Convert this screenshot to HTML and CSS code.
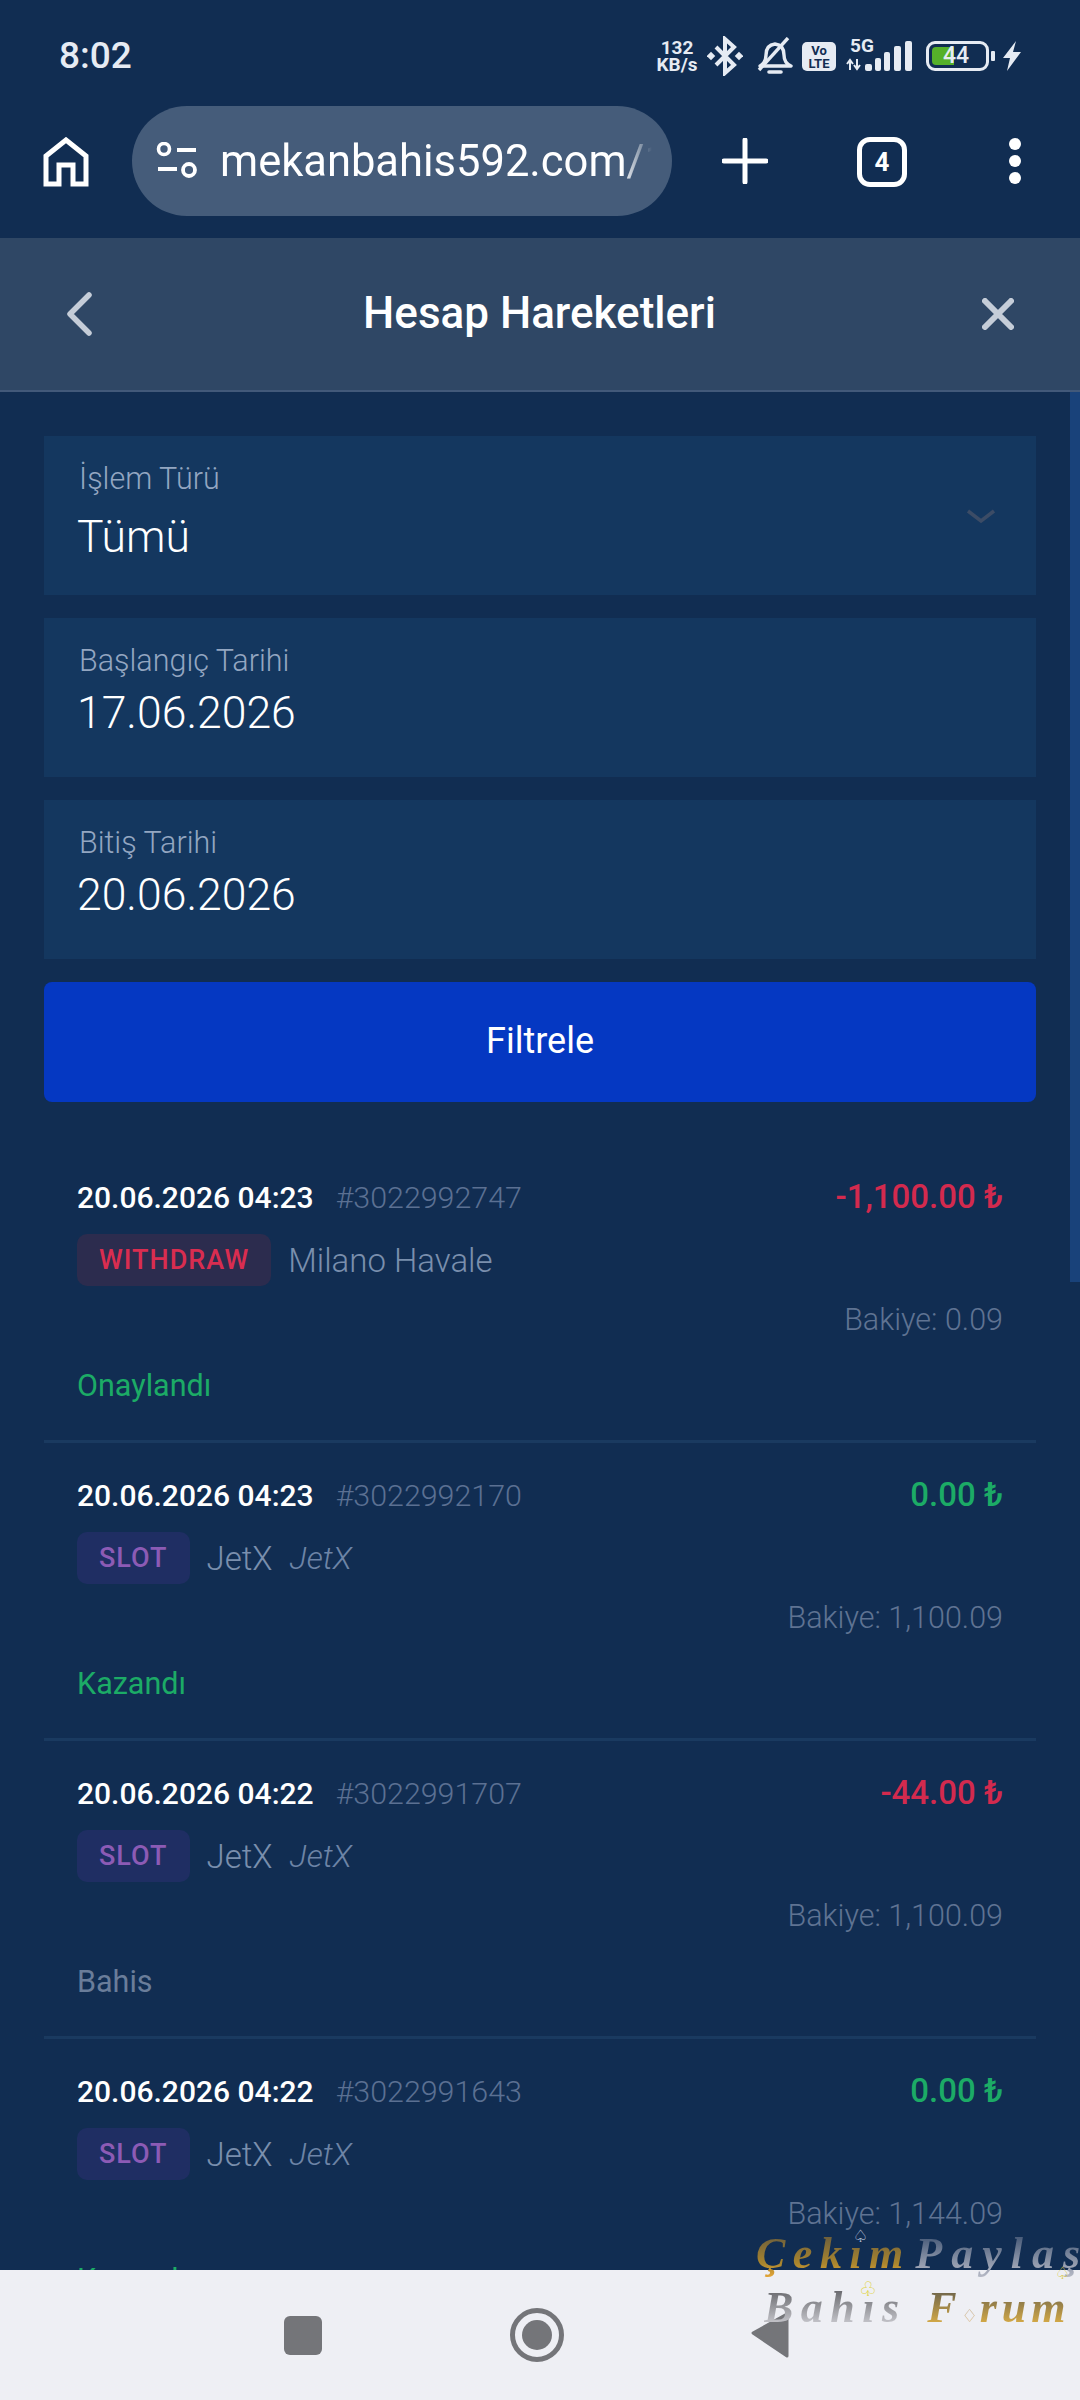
FILE: index.html
```html
<!DOCTYPE html>
<html lang="tr">

<head>
    <meta charset="UTF-8">
    <meta name="viewport" content="width=device-width, initial-scale=1.0">
    <title>Hesap Hareketleri</title>
    <link rel="stylesheet" href="styles.css">
</head>

<body>
    <header class="statusBar">
        <span class="clock">8:02</span>
        <div class="statusIcons">
            <span class="netSpeed">132<br>KB/s</span>
            <svg class="iconBt" viewBox="0 0 36 40" width="36" height="40">
                <path d="M9 11 L27 29 L18 37 V3 L27 11 L9 29" fill="none" stroke="#e6ebf3" stroke-width="4" />
                <rect x="1" y="17" width="6" height="6" transform="rotate(45 4 20)" fill="#e6ebf3" />
                <rect x="29" y="17" width="6" height="6" transform="rotate(45 32 20)" fill="#e6ebf3" />
            </svg>
            <svg class="iconBell" viewBox="0 0 36 38" width="36" height="38">
                <path d="M3 29 Q9 26 9 18 Q9 8 18 7 Q27 8 27 18 Q27 26 34 29 Z" fill="none" stroke="#e6ebf3" stroke-width="3.4" stroke-linejoin="round" />
                <path d="M12 35 H24" stroke="#e6ebf3" stroke-width="3.6" stroke-linecap="round" />
                <path d="M2 33 L31 1" stroke="#e6ebf3" stroke-width="3.4" />
            </svg>
            <span class="volte">Vo<br>LTE</span>
            <div class="signal">
                <span class="fiveG">5G</span>
                <svg viewBox="0 0 66 32" width="66" height="32">
                    <path d="M4 20 V30 M1 24 L4 20 L7 24 M11 19 V29 M8 25 L11 29 L14 25" fill="none" stroke="#e6ebf3" stroke-width="2" />
                    <rect x="19" y="24" width="7" height="7" rx="2" fill="#e6ebf3" />
                    <rect x="29" y="18" width="6" height="13" rx="2" fill="#e6ebf3" />
                    <rect x="38" y="12" width="6" height="19" rx="2" fill="#e6ebf3" />
                    <rect x="48" y="6" width="7" height="25" rx="2" fill="#e6ebf3" />
                    <rect x="59" y="1" width="7" height="30" rx="2" fill="#e6ebf3" />
                </svg>
            </div>
            <div class="battery">
                <div class="batteryBody">
                    <span class="batteryFill"></span>
                    <span class="batteryText">44</span>
                </div>
                <span class="batteryCap"></span>
            </div>
            <svg class="iconBolt" viewBox="0 0 20 30" width="20" height="30">
                <path d="M14 0 L1 17 H8 L5 30 L19 11 H11 Z" fill="#e6ebf3" />
            </svg>
        </div>
    </header>

    <nav class="toolbar">
        <svg viewBox="0 0 46 50" width="46" height="50">
            <path d="M3 47 V19 L23 3 L43 19 V47 H30 V28 H16 V47 Z" fill="none" stroke="#fff" stroke-width="5" />
        </svg>
        <div class="urlPill">
            <svg viewBox="0 0 42 38" width="42" height="38">
                <circle cx="8" cy="7" r="5.5" fill="none" stroke="#fff" stroke-width="3.6" />
                <path d="M21 8 H40 M2 27 H21" stroke="#fff" stroke-width="4" />
                <circle cx="33" cy="28" r="6" fill="none" stroke="#fff" stroke-width="3.8" />
            </svg>
            <span class="urlText">mekanbahis592.com/1</span>
        </div>
        <svg class="iconPlus" viewBox="0 0 46 46" width="46" height="46">
            <path d="M23 2 V44 M2 23 H44" stroke="#fff" stroke-width="5" stroke-linecap="round" />
        </svg>
        <span class="tabCount">4</span>
        <div class="dots"><i></i><i></i><i></i></div>
    </nav>

    <main class="sheet">
        <div class="sheetHead">
            <svg viewBox="0 0 26 44" width="26" height="44">
                <path d="M23 3 L4 22 L23 41" fill="none" stroke="#c5cdd8" stroke-width="5.5" stroke-linecap="round" stroke-linejoin="round" />
            </svg>
            <h1>Hesap Hareketleri</h1>
            <svg viewBox="0 0 32 32" width="32" height="32">
                <path d="M3 3 L29 29 M29 3 L3 29" stroke="#c5cdd8" stroke-width="6" stroke-linecap="round" />
            </svg>
        </div>

        <div class="sheetBody">
            <span class="scrollThumb"></span>

            <form class="filters">
                <div class="field fieldSelect">
                    <label>İşlem Türü</label>
                    <span class="fieldValue">Tümü</span>
                    <svg class="fieldArrow" viewBox="0 0 30 14" width="30" height="14">
                        <path d="M2 2 L15 12 L28 2" fill="none" stroke="#3c4c66" stroke-width="3.5" />
                    </svg>
                </div>
                <div class="field">
                    <label>Başlangıç Tarihi</label>
                    <span class="fieldValue">17.06.2026</span>
                </div>
                <div class="field">
                    <label>Bitiş Tarihi</label>
                    <span class="fieldValue">20.06.2026</span>
                </div>
                <button type="button" class="btnFilter">Filtrele</button>
            </form>

            <section class="list">
                <article class="row">
                    <div class="rowTop">
                        <span class="rowDate">20.06.2026 04:23</span>
                        <span class="rowId">#3022992747</span>
                        <span class="rowAmount red">-1,100.00 ₺</span>
                    </div>
                    <div class="rowInfo">
                        <span class="badge badgeRed">WITHDRAW</span>
                        <span class="rowName">Milano Havale</span>
                    </div>
                    <div class="rowBalance">Bakiye: 0.09</div>
                    <div class="rowStatus green">Onaylandı</div>
                </article>
                <article class="row">
                    <div class="rowTop">
                        <span class="rowDate">20.06.2026 04:23</span>
                        <span class="rowId">#3022992170</span>
                        <span class="rowAmount green">0.00 ₺</span>
                    </div>
                    <div class="rowInfo">
                        <span class="badge badgeSlot">SLOT</span>
                        <span class="rowName">JetX</span>
                        <em class="rowGame">JetX</em>
                    </div>
                    <div class="rowBalance">Bakiye: 1,100.09</div>
                    <div class="rowStatus green">Kazandı</div>
                </article>
                <article class="row">
                    <div class="rowTop">
                        <span class="rowDate">20.06.2026 04:22</span>
                        <span class="rowId">#3022991707</span>
                        <span class="rowAmount red">-44.00 ₺</span>
                    </div>
                    <div class="rowInfo">
                        <span class="badge badgeSlot">SLOT</span>
                        <span class="rowName">JetX</span>
                        <em class="rowGame">JetX</em>
                    </div>
                    <div class="rowBalance">Bakiye: 1,100.09</div>
                    <div class="rowStatus grey">Bahis</div>
                </article>
                <article class="row">
                    <div class="rowTop">
                        <span class="rowDate">20.06.2026 04:22</span>
                        <span class="rowId">#3022991643</span>
                        <span class="rowAmount green">0.00 ₺</span>
                    </div>
                    <div class="rowInfo">
                        <span class="badge badgeSlot">SLOT</span>
                        <span class="rowName">JetX</span>
                        <em class="rowGame">JetX</em>
                    </div>
                    <div class="rowBalance">Bakiye: 1,144.09</div>
                    <div class="rowStatus green">Kazandı</div>
                </article>
            </section>
        </div>
    </main>

    <footer class="navBar">
        <span class="navSquare"></span>
        <span class="navCircle"><i></i></span>
        <svg viewBox="0 0 38 46" width="38" height="46">
            <path d="M36 2 V44 L2 21 Z" fill="#747579" stroke="#747579" stroke-width="3" stroke-linejoin="round" />
        </svg>
    </footer>

    <div class="watermark">
        <span class="markTop"><b class="gold">Çekım</b> <b class="silver">Paylaş</b></span>
        <span class="markBottom"><b class="silverLight">Bahıs</b> <b class="goldLight">F<i class="markDiamond">♢</i>rum</b></span>
        <i class="markSpade">♤</i>
        <i class="markHeart">♤</i>
        <i class="markClub">♧</i>
    </div>
</body>

</html>
```

FILE: styles.css
```css
* {
    margin: 0;
    padding: 0;
    box-sizing: border-box;
}

body {
    width: 1080px;
    height: 2400px;
    background-color: #112d52;
    font-family: Roboto, "Liberation Sans", sans-serif;
    color: #fff;
    display: flex;
    flex-direction: column;
    overflow: hidden;
    position: relative;
}

/* status bar */
.statusBar {
    height: 106px;
    flex: none;
    padding: 28px 0 0 59px;
    display: flex;
    justify-content: space-between;
    align-items: flex-start;
}

.clock {
    font-size: 37px;
    line-height: 56px;
    font-weight: 500;
    color: #e6ebf3;
}

.statusIcons {
    display: flex;
    align-items: center;
    height: 56px;
    padding-right: 58px;
}

.netSpeed {
    width: 42px;
    font-size: 19px;
    line-height: 17px;
    font-weight: 700;
    color: #e6ebf3;
    text-align: center;
    white-space: nowrap;
}

.iconBt {
    margin-left: 9px;
}

.iconBell {
    margin-left: 14px;
}

.volte {
    width: 34px;
    height: 29px;
    margin-left: 9px;
    background-color: #e6ebf3;
    border-radius: 5px;
    color: #112d52;
    font-size: 13px;
    line-height: 13px;
    font-weight: 700;
    text-align: center;
    padding-top: 2px;
}

.signal {
    position: relative;
    width: 66px;
    height: 32px;
    margin-left: 10px;
}

.signal svg {
    display: block;
}

.fiveG {
    position: absolute;
    left: 4px;
    top: -4px;
    font-size: 19px;
    line-height: 20px;
    font-weight: 700;
    color: #e6ebf3;
}

.battery {
    display: flex;
    align-items: center;
    gap: 2px;
    margin-left: 14px;
}

.batteryBody {
    width: 63px;
    height: 30px;
    border: 3px solid #e6ebf3;
    border-radius: 9px;
    position: relative;
    padding: 3px;
}

.batteryFill {
    display: block;
    width: 22px;
    height: 100%;
    background-color: #55b02a;
    border-radius: 4px 0 0 4px;
}

.batteryText {
    position: absolute;
    left: 14px;
    top: 0;
    font-size: 23px;
    line-height: 24px;
    font-weight: 500;
    color: #e6ebf3;
}

.batteryCap {
    width: 4px;
    height: 10px;
    background-color: #e6ebf3;
    border-radius: 1px;
}

.iconBolt {
    margin-left: 7px;
}

/* browser toolbar */
.toolbar {
    height: 132px;
    flex: none;
    display: flex;
    align-items: flex-start;
    padding-left: 43px;
}

.toolbar > svg:first-child {
    margin-top: 31px;
}

.urlPill {
    width: 540px;
    height: 110px;
    margin-left: 43px;
    background-color: #455c7a;
    border-radius: 55px;
    display: flex;
    align-items: center;
    padding-left: 24px;
    gap: 22px;
    overflow: hidden;
}

.urlPill svg {
    flex: none;
}

.urlText {
    font-size: 43.5px;
    white-space: nowrap;
    width: 432px;
    overflow: hidden;
    -webkit-mask-image: linear-gradient(to right, #000 93%, transparent 100%);
    mask-image: linear-gradient(to right, #000 93%, transparent 100%);
}

.iconPlus {
    margin: 32px 0 0 50px;
}

.tabCount {
    width: 50px;
    height: 50px;
    margin: 31px 0 0 89px;
    border: 5px solid #fff;
    border-radius: 13px;
    font-size: 26px;
    line-height: 40px;
    font-weight: 700;
    text-align: center;
}

.dots {
    margin: 32px 0 0 102px;
    display: flex;
    flex-direction: column;
    gap: 5px;
}

.dots i {
    display: block;
    width: 12px;
    height: 12px;
    background-color: #fff;
    border-radius: 50%;
}

/* sheet */
.sheet {
    flex: 1;
    min-height: 0;
    display: flex;
    flex-direction: column;
}

.sheetHead {
    height: 154px;
    flex: none;
    background-color: #2f4765;
    border-bottom: 2px solid #42597a;
    display: flex;
    align-items: center;
    justify-content: space-between;
    padding: 0 66px;
}

.sheetHead h1 {
    font-size: 44px;
    font-weight: 500;
    margin: -2px 0 0 5px;
}

.sheetBody {
    flex: 1;
    min-height: 0;
    position: relative;
    overflow: hidden;
    padding: 44px 44px 0;
}

.scrollThumb {
    position: absolute;
    top: 0;
    right: 0;
    width: 10px;
    height: 890px;
    background-color: #19427a;
}

.filters {
    display: flex;
    flex-direction: column;
    gap: 23px;
}

.field {
    height: 159px;
    background-color: #14375f;
    padding: 26px 33px 0;
    position: relative;
    display: flex;
    flex-direction: column;
}

.field label {
    font-size: 30.5px;
    line-height: 34px;
    font-weight: 300;
    color: #93a6c1;
    padding-left: 2px;
}

.fieldValue {
    font-size: 44.5px;
    line-height: 52px;
    font-weight: 300;
    margin-top: 9px;
}

.fieldSelect .fieldValue {
    margin-top: 15px;
}

.fieldArrow {
    position: absolute;
    right: 40px;
    top: 73px;
}

.btnFilter {
    height: 120px;
    background-color: #0538c2;
    border: none;
    border-radius: 8px;
    color: #fff;
    font-family: inherit;
    font-size: 36px;
    font-weight: 400;
    padding-bottom: 3px;
}

/* list */
.list {
    padding-top: 43px;
}

.row {
    height: 298px;
    padding: 31px 33px 0;
    border-bottom: 3px solid #1a3a60;
    display: flex;
    flex-direction: column;
}

.rowTop {
    display: flex;
    align-items: baseline;
    height: 44px;
}

.rowDate {
    font-size: 30px;
    line-height: 44px;
    font-weight: 500;
}

.rowId {
    font-size: 30.4px;
    font-weight: 300;
    color: #5b7092;
    margin-left: 22px;
}

.rowAmount {
    font-size: 33px;
    font-weight: 500;
    margin-left: auto;
}

.rowInfo {
    display: flex;
    align-items: center;
    height: 52px;
    margin-top: 14px;
}

.badge {
    height: 52px;
    padding: 0 22px;
    border-radius: 10px;
    font-size: 27px;
    line-height: 52px;
    font-weight: 500;
    letter-spacing: 1px;
}

.badgeRed {
    background-color: #2c2c4e;
    color: #d92d50;
}

.badgeSlot {
    background-color: #1f2e63;
    color: #8c5bb5;
}

.rowName {
    font-size: 33px;
    font-weight: 300;
    color: #7a8fad;
    margin-left: 17px;
}

.rowGame {
    font-size: 32px;
    font-weight: 300;
    color: #6d84a6;
    margin-left: 17px;
}

.rowBalance {
    font-size: 30.5px;
    font-weight: 300;
    line-height: 36px;
    color: #5f7392;
    text-align: right;
    margin-top: 16px;
}

.rowStatus {
    font-size: 30.5px;
    line-height: 36px;
    margin-top: 30px;
}

.red {
    color: #d32a4e;
}

.green {
    color: #1cab66;
}

.grey {
    color: #6a7d9a;
}

/* android nav bar */
.navBar {
    height: 130px;
    flex: none;
    background-color: #eeeff4;
    display: flex;
    align-items: center;
    padding-left: 284px;
}

.navSquare {
    width: 38px;
    height: 39px;
    background-color: #747579;
    border-radius: 6px;
}

.navCircle {
    width: 54px;
    height: 54px;
    margin-left: 188px;
    border: 5px solid #747579;
    border-radius: 50%;
    display: flex;
    align-items: center;
    justify-content: center;
}

.navCircle i {
    display: block;
    width: 30px;
    height: 30px;
    background-color: #747579;
    border-radius: 50%;
}

.navBar svg {
    margin-left: 187px;
}

/* forum watermark over the bottom right corner */
.watermark {
    position: absolute;
    left: 756px;
    top: 2228px;
    width: 324px;
    display: flex;
    flex-direction: column;
    font-family: "Liberation Serif", serif;
    font-style: italic;
    font-size: 44px;
    line-height: 52px;
    letter-spacing: 7.5px;
    word-spacing: -14px;
    white-space: nowrap;
}

.watermark b {
    -webkit-background-clip: text;
    background-clip: text;
    color: transparent;
}

.markBottom {
    padding-left: 8px;
    margin-top: 2px;
    word-spacing: 2px;
}

.markDiamond {
    font-family: "DejaVu Sans", sans-serif;
    font-style: normal;
    font-weight: 400;
    font-size: 18px;
    letter-spacing: 2px;
    color: #e9d9dd;
}

.markSpade,
.markHeart,
.markClub {
    position: absolute;
    font-family: "DejaVu Sans", sans-serif;
    font-style: normal;
    font-size: 17px;
    line-height: 17px;
    letter-spacing: 0;
}

.markSpade {
    left: 97px;
    top: 0;
    color: #c9d3e2;
}

.markHeart {
    left: 299px;
    top: 37px;
    color: #d8c94a;
}

.markClub {
    left: 103px;
    top: 51px;
    font-size: 20px;
    line-height: 20px;
    color: #e0d238;
}

.gold {
    background-image: linear-gradient(to bottom, #5d5540, #a9852e 70%, #e8a93a);
}

.silver {
    background-image: linear-gradient(to bottom, #33496a, #b9bcc8);
    letter-spacing: 9px;
}

.silverLight {
    background-image: linear-gradient(to bottom, #55565a, #dcdce2);
}

.goldLight {
    background-image: linear-gradient(to bottom, #55544c, #f0bc45);
    letter-spacing: 5px;
}
```
